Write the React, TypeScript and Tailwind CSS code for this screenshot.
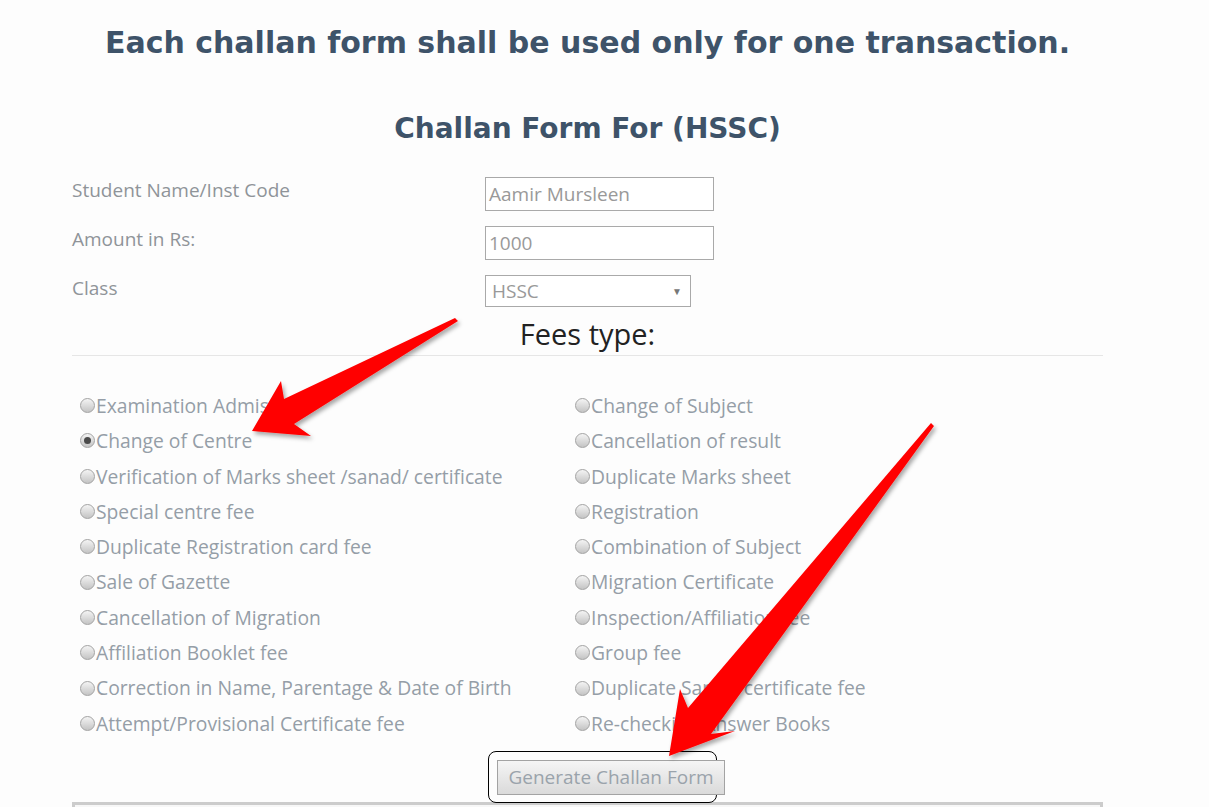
import React from 'react'

const leftFees = [
  'Examination Admission',
  'Change of Centre',
  'Verification of Marks sheet /sanad/ certificate',
  'Special centre fee',
  'Duplicate Registration card fee',
  'Sale of Gazette',
  'Cancellation of Migration',
  'Affiliation Booklet fee',
  'Correction in Name, Parentage & Date of Birth',
  'Attempt/Provisional Certificate fee',
]

const rightFees = [
  'Change of Subject',
  'Cancellation of result',
  'Duplicate Marks sheet',
  'Registration',
  'Combination of Subject',
  'Migration Certificate',
  'Inspection/Affiliation fee',
  'Group fee',
  'Duplicate Sanad/certificate fee',
  'Re-checking Answer Books',
]

function Radio({ checked }: { checked?: boolean }) {
  return (
    <span className="relative mr-px inline-flex h-[15px] w-[15px] shrink-0 items-center justify-center rounded-full border border-[#a3a3a3] bg-linear-to-b from-[#f4f4f4] to-[#c4c4c4]">
      {checked && <span className="h-[7px] w-[7px] rounded-full bg-[#4a4a4a]" />}
    </span>
  )
}

function FeeItem({ label, checked }: { label: string; checked?: boolean }) {
  return (
    <div className="flex h-[35.3px] items-center">
      <Radio checked={checked} />
      <span className="leading-none">{label}</span>
    </div>
  )
}

function Arrows() {
  return (
    <svg
      className="pointer-events-none absolute left-0 top-0"
      width="1209"
      height="807"
      viewBox="0 0 1209 807"
    >
      <defs>
        <filter id="sh" x="-20%" y="-20%" width="140%" height="140%">
          <feDropShadow dx="2" dy="3" stdDeviation="2" floodColor="#000" floodOpacity="0.35" />
        </filter>
      </defs>
      <polygon
        filter="url(#sh)"
        fill="#ff0000"
        points="455,318 284,399 281,381 252,431 311,436 294,424 458,321"
      />
      <polygon
        filter="url(#sh)"
        fill="#ff0000"
        points="931,423 688,708 680,689 669,756 735,731 711,734 934,426"
      />
    </svg>
  )
}

export default function App() {
  return (
    <div className="relative min-h-[807px] overflow-hidden bg-[#fdfdfd] font-['Open_Sans',sans-serif]">
      <div className="ml-[72px] w-[1031px]">
        <h1 className="pt-[27px] text-center font-['DejaVu_Sans',sans-serif] text-[30px] leading-[32px] font-bold text-[#3e5369]">
          Each challan form shall be used only for one transaction.
        </h1>
        <h2 className="mt-[54px] text-center font-['DejaVu_Sans',sans-serif] text-[28px] leading-[32px] font-bold text-[#3e5369]">
          Challan Form For (HSSC)
        </h2>

        <div className="mt-[32px] flex flex-col gap-[15px] text-[19px] text-[#8f9499]">
          <div className="flex items-start">
            <label className="w-[413px] leading-[26px]">Student Name/Inst Code</label>
            <div className="flex h-[34px] w-[229px] items-center border border-[#a9a9a9] bg-white px-[3px] text-[19px] text-[#999]">
              Aamir Mursleen
            </div>
          </div>
          <div className="flex items-start">
            <label className="w-[413px] leading-[26px]">Amount in Rs:</label>
            <div className="flex h-[34px] w-[229px] items-center border border-[#a9a9a9] bg-white px-[3px] text-[19px] text-[#999]">
              1000
            </div>
          </div>
          <div className="flex items-start">
            <label className="w-[413px] leading-[26px]">Class</label>
            <div className="flex h-[32px] w-[206px] items-center justify-between border border-[#a9a9a9] bg-white pl-[6px] pr-[8px] text-[19px] text-[#999]">
              <span>HSSC</span>
              <span className="text-[10px] text-[#777]">▼</span>
            </div>
          </div>
        </div>

        <div className="mt-[9px] text-center text-[29px] leading-[36px] text-[#222]">Fees type:</div>
        <div className="mt-[3px] border-t border-[#e6e6e6]" />

        <div className="mt-[32px] flex text-[19.3px] text-[#959ea7]">
          <div className="w-[503px] pl-[8px]">
            {leftFees.map((f, i) => (
              <FeeItem key={f} label={f} checked={i === 1} />
            ))}
          </div>
          <div className="pl-0">
            {rightFees.map((f) => (
              <FeeItem key={f} label={f} />
            ))}
          </div>
        </div>

        <div className="relative mt-[11px] h-[50px]">
          <div className="absolute left-[416px] top-[-1px] h-[52px] w-[229px] rounded-[8px] border border-black" />
          <button className="absolute left-[425px] top-[8px] h-[35px] w-[228px] border border-[#a3a3a3] bg-linear-to-b from-[#f5f5f5] to-[#dadada] text-[19px] text-[#9aa3ab]">
            Generate Challan Form
          </button>
        </div>
        <div className="h-[40px] border-x-[3px] border-t-[3px] border-[#cccccc] bg-[#f7f7f7]" />
      </div>
      <Arrows />
    </div>
  )
}
